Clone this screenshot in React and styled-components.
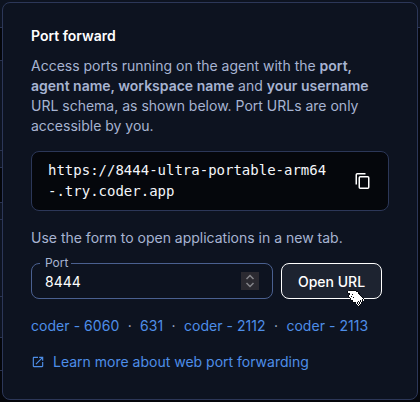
import React from "react";
import styled, { createGlobalStyle } from "styled-components";

const GlobalStyle = createGlobalStyle`
  *, *::before, *::after { box-sizing: border-box; }
  body {
    margin: 0;
    background: #05070c;
    overflow: hidden;
    font-family: Inter, sans-serif;
    font-size: 14px;
  }
`;

const Page = styled.div`
  position: relative;
  width: 420px;
  height: 402px;
  padding: 2px;
  background: #05070c;
`;

const Backdrop = styled.div`
  position: absolute;
  inset: 0;
  display: grid;
  grid-template-columns: 1fr 3px;
`;

const BackdropColumn = styled.div`
  display: flex;
  flex-direction: column;
`;

const Strip = styled.div`
  height: ${(p) => p.$h}px;
  background: ${(p) => (p.$dark ? "#04060a" : "#0d1320")};
  border-bottom: 1px solid #2a3350;
`;

const Popover = styled.section`
  position: relative;
  display: flex;
  flex-direction: column;
  width: 416px;
  height: 398px;
  padding: 22px 28px;
  background: #0d1320;
  border: 1px solid #2c3758;
  border-radius: 8px;
`;

const Title = styled.h3`
  margin: 0;
  font-size: 14px;
  font-weight: 600;
  line-height: 21px;
  color: #fff;
`;

const HelpText = styled.p`
  margin: ${(p) => p.$top}px 0 0;
  font-size: 14px;
  line-height: 20px;
  color: #a7b4d2;
  white-space: nowrap;

  strong { font-weight: 600; }
`;

const CodeBox = styled.div`
  display: flex;
  align-items: center;
  justify-content: space-between;
  height: 60px;
  margin-top: 15px;
  padding: 0 17px 0 16px;
  background: #05070c;
  border: 1px solid #2c3758;
  border-radius: 8px;
`;

const Code = styled.code`
  font-family: "DejaVu Sans Mono", monospace;
  font-size: 14px;
  line-height: 21px;
  color: #f4f6fa;
`;

const CopyButton = styled.button`
  display: flex;
  padding: 0;
  border: 0;
  background: none;
  color: #fff;
`;

const Form = styled.form`
  display: flex;
  gap: 8px;
  margin-top: 15px;
`;

const Field = styled.label`
  position: relative;
  display: flex;
  align-items: center;
  justify-content: space-between;
  width: 242px;
  height: 36px;
  padding: 0 13px;
  border: 1px solid #4a6090;
  border-radius: 8px;
`;

const FieldLabel = styled.span`
  position: absolute;
  top: -9px;
  left: 8px;
  padding: 0 3px 0 5px;
  background: #0d1320;
  font-size: 12px;
  line-height: 16px;
  color: #a7b4d2;
`;

const FieldValue = styled.span`
  font-size: 14px;
  color: #fff;
`;

const Stepper = styled.span`
  display: flex;
  align-items: center;
  justify-content: center;
  width: 18px;
  height: 18px;
  background: #2b2a31;
  color: #85858a;
`;

const OpenButton = styled.button`
  width: 101px;
  height: 36px;
  padding: 2px 0 0;
  font: 500 14px/20px Inter, sans-serif;
  color: #fff;
  background: #1d2330;
  border: 1px solid #fff;
  border-radius: 8px;
`;

const PortLinks = styled.nav`
  display: flex;
  gap: 8.3px;
  margin-top: 17px;
  line-height: 20px;
  letter-spacing: 0.05px;
  color: #a7b4d2;
  white-space: nowrap;
`;

const Link = styled.a`
  color: #4e8ee8;
`;

const DocsLink = styled.a`
  display: flex;
  align-items: center;
  gap: 8px;
  margin-top: 16px;
  line-height: 20px;
  color: #4e8ee8;
`;

const Cursor = styled.svg`
  position: absolute;
  left: 347px;
  top: 290px;
`;

const strips = [
  [28], [33, true], [90], [17], [35, true], [17], [77], [41], [33, true],
];

const ports = ["coder - 6060", "631", "coder - 2112", "coder - 2113"];

// Pointing hand, one character per pixel: # is white, o is dark.
const handRows = [
  "..ooooooo.........",
  "o########oo.......",
  "o##########o......",
  ".oo########oo.....",
  "..o##o######o.....",
  ".o###########o....",
  ".o##o#########o...",
  "..o###o########o..",
  "...o############o.",
  "...o###########o#o",
  "....oo#######o#o#.",
  ".....o#####o#o#o..",
  "......ooo#o#o#o...",
  ".........#o#o#....",
  "..........#o#o....",
  "...........#o.....",
  "............o.....",
];

const pixels = (mark) =>
  handRows
    .flatMap((row, y) =>
      [...row].map((c, x) => (c === mark ? `M${x} ${y}h1v1h-1z` : ""))
    )
    .join("");

export default function App() {
  return (
    <Page>
      <GlobalStyle />
      <Backdrop>
        <BackdropColumn>
          {strips.map(([h, dark], i) => <Strip key={i} $h={h} $dark={dark} />)}
        </BackdropColumn>
        <BackdropColumn>
          <Strip $h={28} />
        </BackdropColumn>
      </Backdrop>
      <Popover>
        <Title>Port forward</Title>
        <HelpText $top={10}>
          Access ports running on the agent with the <strong>port,</strong><br />
          <strong>agent name, workspace name</strong> and <strong>your username</strong><br />
          URL schema, as shown below. Port URLs are only<br />
          accessible by you.
        </HelpText>
        <CodeBox>
          <Code>https://8444-ultra-portable-arm64<br />-.try.coder.app</Code>
          <CopyButton type="button" aria-label="Copy">
            <svg width="16" height="16" viewBox="0 0 16 16" fill="none" stroke="currentColor" strokeWidth="1.500">
              <path d="M1.250 11.500V1.750Q1.250 .75 2.250 .75H10.500" />
              <rect x="4.250" y="3.750" width="9.500" height="11.500" rx="1" />
            </svg>
          </CopyButton>
        </CodeBox>
        <HelpText $top={17}>Use the form to open applications in a new tab.</HelpText>
        <Form>
          <Field>
            <FieldLabel>Port</FieldLabel>
            <FieldValue>8444</FieldValue>
            <Stepper>
              <svg width="10" height="14" viewBox="0 0 10 14" fill="none" stroke="currentColor" strokeWidth="1.5">
                <path d="M1.5 5L5 1.5 8.500 5M1.500 9L5 12.500 8.500 9" />
              </svg>
            </Stepper>
          </Field>
          <OpenButton type="button">Open URL</OpenButton>
        </Form>
        <PortLinks>
          {ports.map((port, i) => (
            <React.Fragment key={port}>
              {i > 0 && <span>·</span>}
              <Link>{port}</Link>
            </React.Fragment>
          ))}
        </PortLinks>
        <DocsLink>
          <svg width="14" height="14" viewBox="0 0 24 24" fill="currentColor">
            <path d="M19 19H5V5h7V3H5c-1.110 0-2 .9-2 2v14c0 1.100.890 2 2 2h14c1.100 0 2-.9 2-2v-7h-2v7zM14 3v2h3.590l-9.830 9.830 1.410 1.410L19 6.410V10h2V3h-7z" />
          </svg>
          Learn more about web port forwarding
        </DocsLink>
      </Popover>
      <Cursor width="18" height="17" viewBox="0 0 18 17" shapeRendering="crispEdges">
        <path fill="#05070c" d={pixels("o")} />
        <path fill="#fff" d={pixels("#")} />
      </Cursor>
    </Page>
  );
}
